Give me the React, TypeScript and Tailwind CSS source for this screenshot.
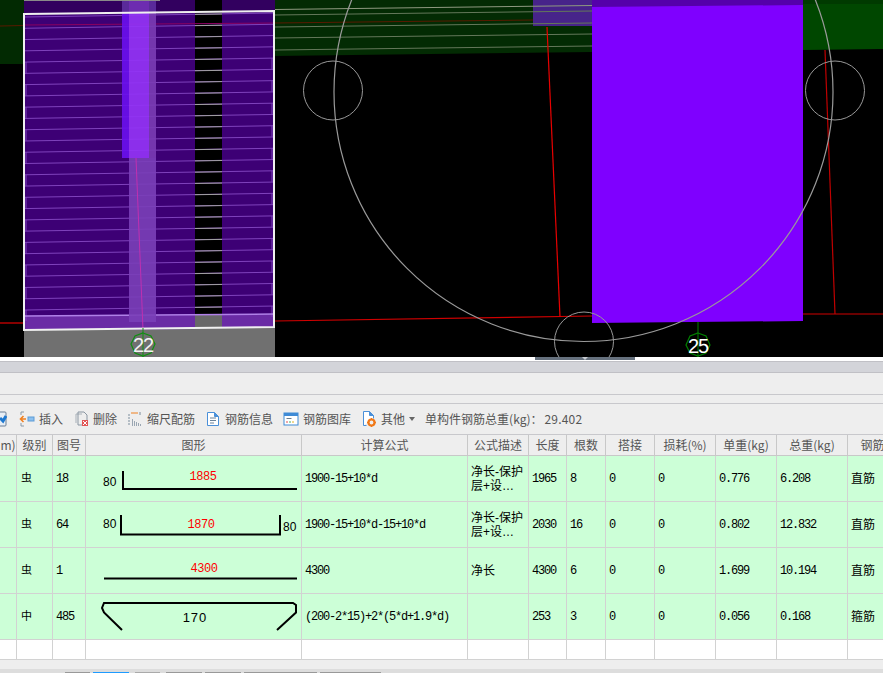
import React from "react";

// hatch lines of the stirrups in the left column
const hatch = Array.from({ length: 27 }, (_, i) => 17 + i * 11.27);

const CadView = () => {
  return (
    <svg viewBox="0 0 883 357" className="block h-[357px] w-[883px] bg-black">
      {/* green beams */}
      <polygon points="0,0 24,0 24,64 0,64" fill="#022a02" />
      <polygon points="275,0 592,0 592,52 275,56" fill="#032b03" />
      <polygon points="803,0 883,0 883,49 803,50" fill="#004700" />
      <rect x="803" y="0" width="80" height="4" fill="#003a00" />

      {/* left column */}
      <rect x="24" y="328" width="251" height="29" fill="#707070" />
      <rect x="24" y="0" width="171" height="14" fill="#32005f" />
      <rect x="222" y="0" width="53" height="12" fill="#32005f" />
      <polygon points="25,14 195,12 195,329 25,330" fill="#3d0075" />
      <polygon points="222,12 275,11 275,327 222,328" fill="#3d0075" />
      <rect x="195" y="314" width="27" height="14" fill="#686868" />
      <polygon points="25,316 195,315 195,329 25,330" fill="#6a2ba5" />
      <polygon points="222,315 275,314 275,327 222,328" fill="#6a2ba5" />

      <line x1="0" y1="26" x2="25" y2="25.5" stroke="#5a1a00" />
      <line x1="25" y1="25" x2="275" y2="23" stroke="#8a0060" />
      <line x1="275" y1="23" x2="533" y2="20" stroke="#5a1a00" />

      {hatch.map((y, i) => (
        <g key={i}>
          <line x1="25" y1={y} x2="275" y2={y - 4} stroke="#7f42bc" />
          <line x1="195" y1={y - 2.6} x2="222" y2={y - 3} stroke="#a0a0a0" />
          {i % 2 === 0 && i > 2 && (
            <path
              d={`M26 ${y} V${y + 11} M272 ${y - 4} V${y + 7}`}
              stroke="#7f42bc"
              fill="none"
            />
          )}
        </g>
      ))}
      <line x1="25" y1="316" x2="275" y2="314" stroke="#b080e8" strokeWidth="1.5" />

      {/* upper column overlay */}
      <rect x="129" y="158" width="27" height="164" fill="#7a3fb8" opacity="0.9" />
      <rect x="122" y="13" width="7" height="145" fill="#6a10f0" opacity="0.9" />
      <rect x="129" y="13" width="20" height="145" fill="#9333f5" opacity="0.92" />
      <rect x="149" y="13" width="7" height="145" fill="#7a3cb5" opacity="0.9" />
      <rect x="122" y="0" width="34" height="13" fill="#5a2a9a" />
      <rect x="129" y="0" width="20" height="13" fill="#6d2cb0" />
      <line x1="24" y1="0.5" x2="160" y2="0.5" stroke="#8a8a8a" />

      {/* beam: the patch lies under the hatch */}
      <rect x="533" y="0" width="59" height="26" fill="#47248a" />
      <rect x="592" y="0" width="211" height="7" fill="#5500aa" />
      {[9.5, 15, 27, 38, 50].map((y, i) => (
        <line key={i} x1="275" y1={y} x2="592" y2={y - 4} stroke={i === 0 ? "#8f9a80" : "#64785a"} />
      ))}

      {/* right column */}
      <polygon points="592,7 803,5 803,321 592,323" fill="#7f00ff" />

      {/* axis lines */}
      <line x1="0" y1="323" x2="24" y2="323" stroke="#e00000" strokeWidth="1.2" />
      <polyline points="275,321 592,316" fill="none" stroke="#d00000" strokeWidth="1.2" />
      <polyline points="803,314 883,314" fill="none" stroke="#d00000" strokeWidth="1.2" />
      <line x1="547" y1="27" x2="560" y2="317" stroke="#e80000" strokeWidth="1.2" />
      <line x1="825" y1="50" x2="835" y2="314" stroke="#c00000" strokeWidth="1.2" />
      <line x1="136" y1="158" x2="143" y2="330" stroke="#c030b0" />

      {/* bolts */}
      <circle cx="583.5" cy="92" r="249.5" fill="none" stroke="#9a9a9a" strokeWidth="1.2" />
      <circle cx="333" cy="90.5" r="29.5" fill="none" stroke="#999999" />
      <circle cx="835" cy="90.5" r="29.5" fill="none" stroke="#999999" />
      <circle cx="584" cy="341.5" r="29.5" fill="none" stroke="#999999" />

      <polygon points="24,14 274,11 274,327 24,330" fill="none" stroke="#f0f0f0" strokeWidth="2" />

      {/* axis markers */}
      <line x1="143" y1="328" x2="143" y2="357" stroke="#0f8f0f" />
      <polygon
        points="143,333 151,336 155,344 151,353 143,356 135,353 131,344 135,336"
        fill="none"
        stroke="#0f8f0f"
        strokeWidth="1.2"
      />
      <text x="143" y="352" textAnchor="middle" fontFamily="Liberation Sans, sans-serif" fontSize="20" letterSpacing="-1" fill="#f2f2f2">
        22
      </text>
      <line x1="698" y1="322" x2="698" y2="357" stroke="#008000" />
      <polygon
        points="698,333 706,336 710,345 706,353 698,356 690,353 686,345 690,336"
        fill="none"
        stroke="#008000"
        strokeWidth="1.2"
      />
      <text x="698" y="353" textAnchor="middle" fontFamily="Liberation Sans, sans-serif" fontSize="20" letterSpacing="-1" fill="#ffffff">
        25
      </text>
    </svg>
  );
};

const PartialIcon = () => (
  <svg width="16" height="16" viewBox="0 0 16 16" className="shrink-0">
    <rect x="1" y="1" width="14" height="14" rx="1" fill="#e8eef5" stroke="#6b7f95" />
    <path d="M9 7l3 3 3-5" stroke="#1e78d0" strokeWidth="3" fill="none" />
  </svg>
);

const InsertIcon = () => (
  <svg width="16" height="16" viewBox="0 0 16 16" className="shrink-0">
    <path d="M5 1H2v3M2 12v3h3" stroke="#8a9aa8" fill="none" />
    <path d="M7 8H2M4.500 5L1.500 8l3 3" stroke="#f08020" strokeWidth="1.600" fill="none" />
    <rect x="9" y="6" width="6" height="4" fill="#8cc0ee" stroke="#5c9bd6" />
  </svg>
);

const DeleteIcon = () => (
  <svg width="16" height="16" viewBox="0 0 16 16" className="shrink-0">
    <path d="M3 12V3h6" stroke="#a8b0b8" fill="none" />
    <path d="M5 14V1h6l3 3v5M5 14h4" stroke="#8a96a2" fill="none" />
    <rect x="9" y="9" width="6" height="6" fill="#e25555" />
    <path d="M10 10l4 4M14 10l-4 4" stroke="#ffffff" />
  </svg>
);

const ScaleIcon = () => (
  <svg width="16" height="16" viewBox="0 0 16 16" className="shrink-0">
    <path d="M2 3v12" stroke="#7b8c9c" strokeDasharray="2 1" />
    <path d="M4 2h7" stroke="#f08020" />
    <path d="M13 1v3" stroke="#7b8c9c" />
    <path d="M5.500 8v7M7.500 10v5M9.500 11v4M11.500 12v3M13.500 13v2" stroke="#9aa6b2" />
  </svg>
);

const InfoIcon = () => (
  <svg width="16" height="16" viewBox="0 0 16 16" className="shrink-0">
    <path d="M2.500 1.500h7l4 4v9h-11z" fill="#ffffff" stroke="#4a90d9" />
    <path d="M9.500 1.500v4h4" fill="#4a90d9" stroke="#4a90d9" />
    <path d="M5 7h6M5 9.500h6M5 12h4" stroke="#6a8299" />
  </svg>
);

const LibraryIcon = () => (
  <svg width="16" height="16" viewBox="0 0 16 16" className="shrink-0">
    <rect x="1" y="2" width="14" height="12" fill="#ffffff" stroke="#3f8bd6" />
    <rect x="1" y="2" width="14" height="3" fill="#3f8bd6" />
    <path d="M3.500 7.500h5" stroke="#6a7c8c" />
    <path d="M3 11h2" stroke="#e05050" />
    <path d="M6 11h2" stroke="#40b060" />
    <path d="M9 11h2" stroke="#e0b020" />
  </svg>
);

const OtherIcon = () => (
  <svg width="16" height="16" viewBox="0 0 16 16" className="shrink-0">
    <path d="M2.500 14.500V.5h6l4 4v3M2.500 14.500h3" fill="#ffffff" stroke="#4a90d9" />
    <path d="M8.500 .5v4h4" fill="#4a90d9" stroke="#4a90d9" />
    <circle cx="10.500" cy="11.500" r="3" fill="none" stroke="#f07818" strokeWidth="2.200" />
    <path d="M10.500 7v1.500M10.500 14.500V16M6 11.500h1.500M13.500 11.500H15" stroke="#f07818" strokeWidth="1.500" />
  </svg>
);

const toolbarItems = [
  { icon: <InsertIcon />, label: "插入" },
  { icon: <DeleteIcon />, label: "删除" },
  { icon: <ScaleIcon />, label: "缩尺配筋" },
  { icon: <InfoIcon />, label: "钢筋信息" },
  { icon: <LibraryIcon />, label: "钢筋图库" },
  { icon: <OtherIcon />, label: "其他" },
];

const Toolbar = () => {
  return (
    <div className="box-border flex h-[31px] items-center overflow-hidden border-b border-[#c8c8cc] bg-[#eeeeee] text-[12px] text-[#555555]">
      <div className="ml-[-9px] mr-[12px]">
        <PartialIcon />
      </div>
      <div className="flex items-center gap-[10px]">
        {toolbarItems.map((item) => (
          <div key={item.label} className="flex items-center gap-[4px] whitespace-nowrap">
            {item.icon}
            <span>{item.label}</span>
          </div>
        ))}
      </div>
      <svg width="6" height="4" viewBox="0 0 6 4" className="ml-[4px] shrink-0">
        <path d="M0 0h6L3 4z" fill="#666666" />
      </svg>
      <span className="ml-[10px] whitespace-nowrap">单构件钢筋总重(kg)：</span>
      <span className="ml-[2px] whitespace-nowrap tracking-[0.2px]">29.402</span>
    </div>
  );
};

const shapeFont = "font-['Liberation_Sans'] text-[12px]";

const Shape1 = () => (
  <svg viewBox="0 0 215 45" className="block h-[45px] w-[215px]">
    <text x="17" y="29.500" className={shapeFont}>80</text>
    <path d="M37 15V33H211" stroke="#000000" strokeWidth="2" fill="none" />
    <text x="117" y="24" textAnchor="middle" fill="#ff0000" fontFamily="Liberation Mono" fontSize="12" letterSpacing="-0.5">1885</text>
  </svg>
);

const Shape2 = () => (
  <svg viewBox="0 0 215 45" className="block h-[45px] w-[215px]">
    <text x="17" y="26" className={shapeFont}>80</text>
    <path d="M35 13V32.500H194V13" stroke="#000000" strokeWidth="2" fill="none" />
    <text x="115" y="26" textAnchor="middle" fill="#ff0000" fontFamily="Liberation Mono" fontSize="12" letterSpacing="-0.5">1870</text>
    <text x="197" y="29" className={shapeFont}>80</text>
  </svg>
);

const Shape3 = () => (
  <svg viewBox="0 0 215 45" className="block h-[45px] w-[215px]">
    <path d="M18 30.500H211" stroke="#000000" strokeWidth="2" fill="none" />
    <text x="118" y="24" textAnchor="middle" fill="#ff0000" fontFamily="Liberation Mono" fontSize="12" letterSpacing="-0.5">4300</text>
  </svg>
);

const Shape4 = () => (
  <svg viewBox="0 0 215 45" className="block h-[45px] w-[215px]">
    <path d="M36 36L18 18.500L16 14L18 9H207L210 11V18.500L191 36" stroke="#000000" strokeWidth="2" fill="none" />
    <text x="109" y="27.500" textAnchor="middle" fontFamily="Liberation Sans" fontSize="13" letterSpacing="1">170</text>
  </svg>
);

const rows = [
  { grade: "虫", no: "18", shape: <Shape1 />, formula: "1900-15+10*d", desc: ["净长-保护", "层+设…"], len: "1965", count: "8", unit: "0.776", total: "6.208", type: "直筋" },
  { grade: "虫", no: "64", shape: <Shape2 />, formula: "1900-15+10*d-15+10*d", desc: ["净长-保护", "层+设…"], len: "2030", count: "16", unit: "0.802", total: "12.832", type: "直筋" },
  { grade: "虫", no: "1", shape: <Shape3 />, formula: "4300", desc: ["净长"], len: "4300", count: "6", unit: "1.699", total: "10.194", type: "直筋" },
  { grade: "中", no: "485", shape: <Shape4 />, formula: "(200-2*15)+2*(5*d+1.9*d)", desc: [], len: "253", count: "3", unit: "0.056", total: "0.168", type: "箍筋" },
];

const headers = ["m)", "级别", "图号", "图形", "计算公式", "公式描述", "长度", "根数", "搭接", "损耗(%)", "单重(kg)", "总重(kg)", "钢筋"];

const th = "h-[21px] border-r border-b border-[#c8c8c8] p-0 text-center text-[12px] font-normal text-[#555555] whitespace-nowrap overflow-hidden";
const td = "h-[46px] border-r border-b border-[#d2d2d2] py-0 pl-[3px] pr-0 text-left align-middle text-[12px] tracking-[-1.2px] text-black font-['Liberation_Mono','Noto_Sans_CJK_SC',monospace] whitespace-nowrap overflow-hidden";
const cjk = "h-[46px] border-r border-b border-[#d2d2d2] py-0 pl-[3px] pr-0 text-left align-middle text-[12px] leading-[14px] text-black font-['Liberation_Sans','Noto_Sans_CJK_SC',sans-serif] whitespace-nowrap overflow-hidden";
const grade = "h-[46px] border-r border-b border-[#d2d2d2] py-0 pl-[4px] pr-0 text-left align-middle text-[11px] text-black font-['Liberation_Sans','Noto_Sans_CJK_SC',sans-serif] overflow-hidden";

const RebarTable = () => {
  return (
    <div className="h-[225px] overflow-hidden bg-white">
      <table className="w-[898px] table-fixed border-separate border-spacing-0">
        <colgroup>
          <col className="w-[17px]" />
          <col className="w-[36px]" />
          <col className="w-[33px]" />
          <col className="w-[216px]" />
          <col className="w-[166px]" />
          <col className="w-[61px]" />
          <col className="w-[38px]" />
          <col className="w-[39px]" />
          <col className="w-[49px]" />
          <col className="w-[61px]" />
          <col className="w-[61px]" />
          <col className="w-[71px]" />
          <col className="w-[50px]" />
        </colgroup>
        <thead className="bg-[#eeeeee]">
          <tr>
            {headers.map((h) => (
              <th key={h} className={th}>
                {h}
              </th>
            ))}
          </tr>
        </thead>
        <tbody className="bg-[#ccffd7]">
          {rows.map((row) => (
            <tr key={row.no}>
              <td className={td}></td>
              <td className={grade}>{row.grade}</td>
              <td className={td}>{row.no}</td>
              <td className="h-[46px] border-r border-b border-[#d2d2d2] p-0">{row.shape}</td>
              <td className={td}>{row.formula}</td>
              <td className={cjk}>
                {row.desc.map((line) => (
                  <div key={line}>{line}</div>
                ))}
              </td>
              <td className={td}>{row.len}</td>
              <td className={td}>{row.count}</td>
              <td className={td}>0</td>
              <td className={td}>0</td>
              <td className={td}>{row.unit}</td>
              <td className={td}>{row.total}</td>
              <td className={cjk}>{row.type}</td>
            </tr>
          ))}
          <tr className="bg-white">
            {headers.map((h) => (
              <td key={h} className="h-[20px] border-r border-b border-[#d2d2d2] p-0"></td>
            ))}
          </tr>
        </tbody>
      </table>
    </div>
  );
};

const tabs = [
  "ml-[65px] w-[25px] bg-[#999999]",
  "ml-[3px] w-[36px] bg-[#1e9bff]",
  "ml-[6px] w-[25px] bg-[#aaaaaa]",
  "ml-[6px] w-[36px] bg-[#999999]",
  "ml-[3px] w-[36px] bg-[#999999]",
  "ml-[3px] w-[73px] bg-[#999999]",
  "ml-[3px] w-[61px] bg-[#999999]",
];

export default function App() {
  return (
    <div className="flex h-[673px] w-[883px] flex-col overflow-hidden bg-[#eeeeee] font-['Noto_Sans_CJK_SC','Noto_Sans',sans-serif]">
      <CadView />
      <div className="h-[4px] bg-white">
        <div className="ml-[535px] flex h-[3px] w-[100px] justify-center bg-[#66717e]">
          <svg width="6" height="3" viewBox="0 0 6 3">
            <path d="M0 0h6L3 3z" fill="#c8ccd2" />
          </svg>
        </div>
      </div>
      <div className="box-border h-[12px] border-y border-[#c0c0c5] bg-[#d3d4d9]"></div>
      <div className="box-border h-[22px] border-b border-[#c8c8cc]"></div>
      <div className="box-border h-[9px] border-b border-[#c8c8cc]"></div>
      <Toolbar />
      <RebarTable />
      <div className="h-[9px] bg-[#eeeeee]"></div>
      <div className="flex h-[4px] items-end bg-[#dddddd]">
        {tabs.map((tab) => (
          <div key={tab} className={`h-[1px] ${tab}`}></div>
        ))}
      </div>
    </div>
  );
}
